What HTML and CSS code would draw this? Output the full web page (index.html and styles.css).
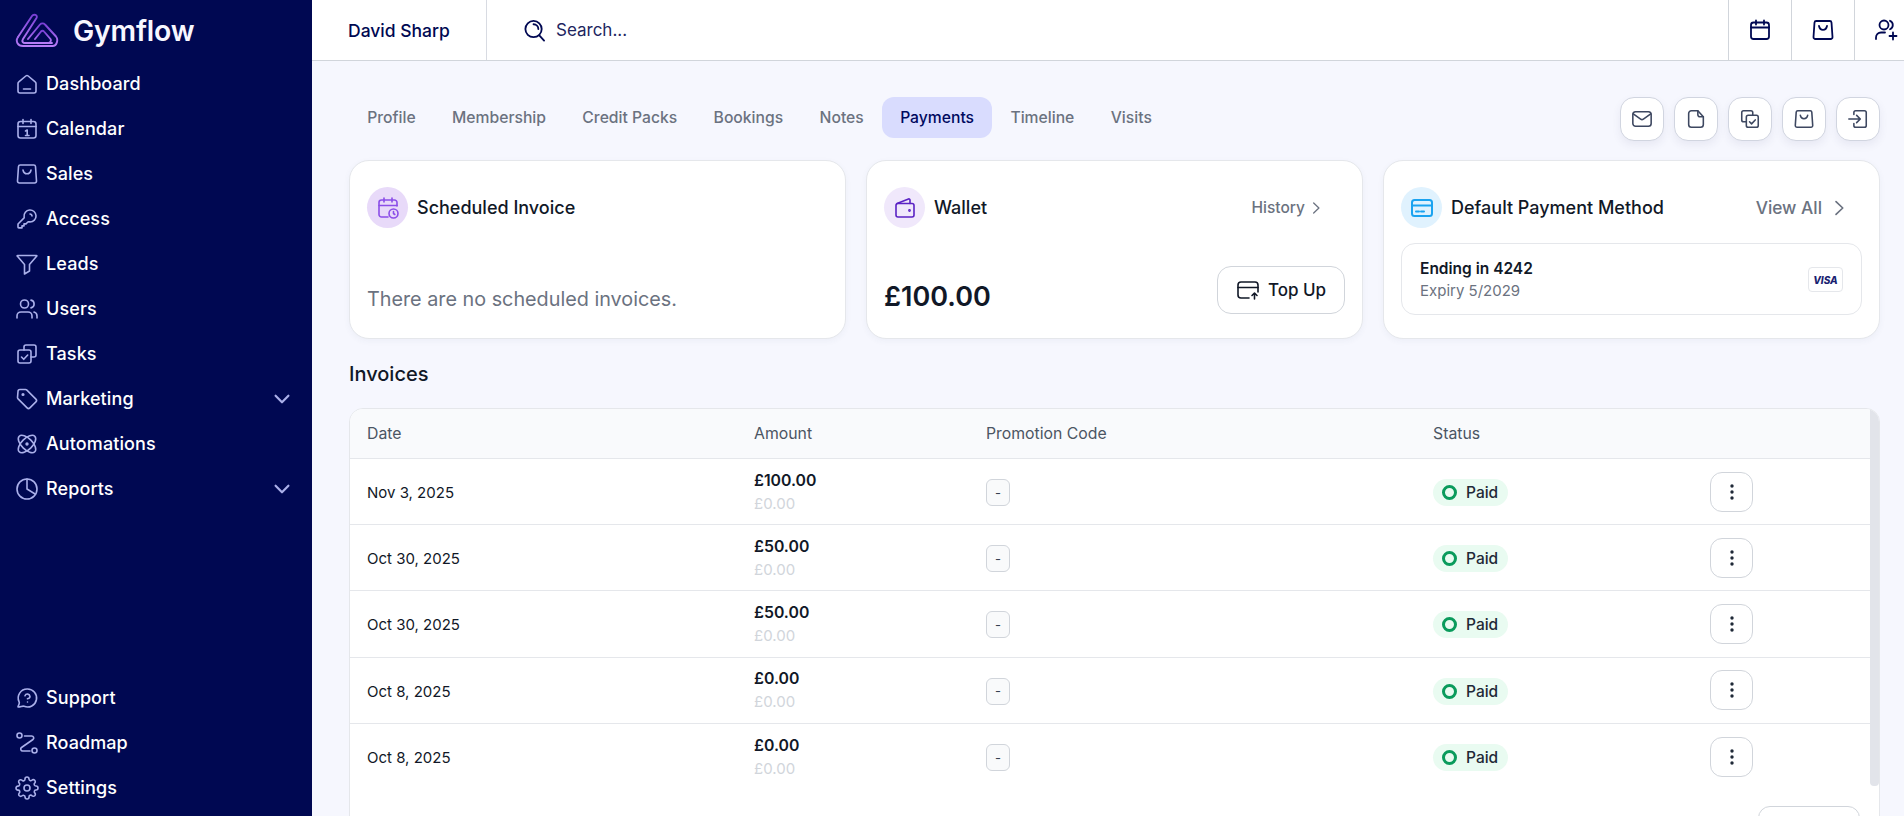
FILE: index.html
```html
<!DOCTYPE html>
<html lang="en">
<head>
<meta charset="utf-8">
<title>Gymflow</title>
<link rel="stylesheet" href="styles.css">
</head>
<body>
<svg class="sprite" aria-hidden="true">
  <defs>
    <linearGradient id="logo-grad" x1="0" y1="0" x2="0" y2="1"><stop offset="0" stop-color="#7a3fd6"/><stop offset="1" stop-color="#b67cf7"/></linearGradient>
    <symbol id="i-home" viewBox="0 0 24 24"><path d="M3 11.5c0-.6.3-1.2.8-1.6l7-5.9c.7-.6 1.700-.6 2.400 0l7 5.900c.5.400.8 1 .8 1.600V19a2 2 0 0 1-2 2H5a2 2 0 0 1-2-2z"/><path d="M8.500 17h7"/></symbol>
    <symbol id="i-cal1" viewBox="0 0 24 24"><rect x="3" y="4.500" width="18" height="16.500" rx="2.500"/><path d="M3 9.500h18M8 2.500v4M16 2.500v4M10.500 14l1.700-1v5.500M10.500 18.500h3.500"/></symbol>
    <symbol id="i-bag" viewBox="0 0 24 24"><path d="M5.200 3h13.600c.9 0 1.600.6 1.700 1.500l1 14.500c.1 1.100-.8 2-1.900 2H4.400c-1.100 0-2-.9-1.900-2l1-14.500C3.600 3.600 4.300 3 5.200 3z"/><path d="M8 8c.5 2.500 2 3.800 4 3.800s3.500-1.300 4-3.800"/></symbol>
    <symbol id="i-key" viewBox="0 0 24 24"><path d="M17 9c0-.5-.2-1-.6-1.400C16 7.200 15.500 7 15 7M15 15a6 6 0 1 0-5.900-5.200c.1.400.1.700.1.800 0 .1-.1.200-.1.300-.1.100-.2.300-.5.500l-5.100 5.100c-.2.200-.3.300-.3.400-.1.100-.2.200-.2.300v2.200c0 .6 0 .8.100 1 .1.200.3.400.5.400.2.100.4.100 1 .1H7v-2h2v-2h2l1.600-1.600c.2-.2.400-.4.500-.4.100-.1.200-.1.300-.1.100 0 .4 0 .8.100.2 0 .5 0 .8 0z"/></symbol>
    <symbol id="i-filter" viewBox="0 0 24 24"><path d="M2.500 3.500h19c.3 0 .5.400.3.600l-7.300 8.400v6.500l-5 3v-9.500L2.200 4.100c-.2-.2 0-.6.300-.6z"/></symbol>
    <symbol id="i-users" viewBox="0 0 24 24"><path d="M17 21v-2a4 4 0 0 0-4-4H6a4 4 0 0 0-4 4v2"/><circle cx="9.500" cy="7" r="4"/><path d="M22 21v-2a4 4 0 0 0-3-3.900M16 3.100a4 4 0 0 1 0 7.800"/></symbol>
    <symbol id="i-tasks" viewBox="0 0 24 24"><path d="M9 8V5a2 2 0 0 1 2-2h8a2 2 0 0 1 2 2v8a2 2 0 0 1-2 2h-3"/><rect x="3" y="8" width="13" height="13" rx="2"/><path d="M6.500 15l2.200 2.300 4-4.300"/></symbol>
    <symbol id="i-tasks2" viewBox="0 0 24 24"><path d="M15 8V5a2 2 0 0 0-2-2H5a2 2 0 0 0-2 2v8a2 2 0 0 0 2 2h3"/><rect x="8" y="8" width="13" height="13" rx="2"/><path d="M11.500 15l2.200 2.300 4-4.300"/></symbol>
    <symbol id="i-tag" viewBox="0 0 24 24"><path d="M3 4.500C3 3.400 3.900 2.500 5 2.500h5.500c.5 0 1 .2 1.400.6l9 9c.8.8.8 2 0 2.800l-6 6c-.8.8-2 .8-2.800 0l-9-9c-.4-.4-.6-.9-.6-1.400z"/><circle cx="8" cy="7.500" r=".8"/></symbol>
    <symbol id="i-atom" viewBox="0 0 24 24"><ellipse cx="12" cy="12" rx="11" ry="5.500" transform="rotate(45 12 12)"/><ellipse cx="12" cy="12" rx="11" ry="5.500" transform="rotate(-45 12 12)"/><circle cx="12" cy="12" r=".9"/></symbol>
    <symbol id="i-pie" viewBox="0 0 24 24"><circle cx="12" cy="12" r="10"/><path d="M12 2v10l8.500 5.200"/></symbol>
    <symbol id="i-support" viewBox="0 0 24 24"><path d="M12.500 3a9 9 0 1 1-3.400 17.300c-.4-.1-.5-.2-.7-.2-.9 0-3.900 1-4.900.9-.5 0-.6-.3-.4-.7.5-.9 1.300-2.800 1.200-3.600 0-.2-.1-.400-.2-.8A9 9 0 0 1 12.500 3z"/><path d="M10 9.700a2.600 2.600 0 0 1 5 .8c0 1.700-2.500 2.300-2.500 2.300M12.500 16h.01"/></symbol>
    <symbol id="i-road" viewBox="0 0 24 24"><circle cx="4.500" cy="4.500" r="2.500"/><circle cx="19.500" cy="19.500" r="2.500"/><path d="M9.500 5h7.200c1.900 0 2.700 2.300 1.300 3.500L6.500 16.500c-1.500 1.100-.7 3.500 1.200 3.500H15"/></symbol>
    <symbol id="i-gear" viewBox="0 0 24 24"><circle cx="12" cy="12" r="3"/><path d="M19.400 15a1.650 1.650 0 0 0 .33 1.820l.06.06a2 2 0 0 1 0 2.830 2 2 0 0 1-2.830 0l-.06-.06a1.650 1.650 0 0 0-1.820-.33 1.650 1.650 0 0 0-1 1.510V21a2 2 0 0 1-2 2 2 2 0 0 1-2-2v-.09A1.650 1.650 0 0 0 9 19.400a1.650 1.650 0 0 0-1.820.33l-.06.06a2 2 0 0 1-2.830 0 2 2 0 0 1 0-2.830l.06-.06a1.650 1.650 0 0 0 .33-1.820 1.650 1.650 0 0 0-1.510-1H3a2 2 0 0 1-2-2 2 2 0 0 1 2-2h.09A1.650 1.650 0 0 0 4.600 9a1.650 1.650 0 0 0-.33-1.820l-.06-.06a2 2 0 0 1 0-2.830 2 2 0 0 1 2.830 0l.06.06a1.650 1.650 0 0 0 1.820.33H9a1.650 1.650 0 0 0 1-1.510V3a2 2 0 0 1 2-2 2 2 0 0 1 2 2v.09a1.650 1.650 0 0 0 1 1.510 1.650 1.650 0 0 0 1.820-.33l.06-.06a2 2 0 0 1 2.830 0 2 2 0 0 1 0 2.830l-.06.06a1.650 1.650 0 0 0-.33 1.820V9a1.650 1.650 0 0 0 1.510 1H21a2 2 0 0 1 2 2 2 2 0 0 1-2 2h-.09a1.650 1.650 0 0 0-1.510 1z"/></symbol>
    <symbol id="i-down" viewBox="0 0 24 24"><path d="M5 8.500l7 7 7-7"/></symbol>
    <symbol id="i-right" viewBox="0 0 24 24"><path d="M8 3.500l9 8.500-9 8.500"/></symbol>
    <symbol id="i-search" viewBox="0 0 24 24"><circle cx="11" cy="10.500" r="8.500"/><path d="M17 17l5 5.500M11 5.500a5 5 0 0 1 5 5"/></symbol>
    <symbol id="i-cal" viewBox="0 0 24 24"><rect x="3" y="4.500" width="18" height="16.500" rx="2.500"/><path d="M3 9.500h18M8 2.500v4M16 2.500v4"/></symbol>
    <symbol id="i-useradd" viewBox="0 0 24 24"><path d="M2 21v-1.500a5 5 0 0 1 5-5h4"/><circle cx="10" cy="7" r="4.500"/><path d="M16 2.800c1.600.6 2.800 2.200 2.800 4.200s-1.200 3.500-2.800 4.200M19 14.500v7M15.500 18h7"/></symbol>
    <symbol id="i-mail" viewBox="0 0 24 24"><rect x="2" y="4" width="20" height="16" rx="3"/><path d="M2.500 6.500l8 5.700c1 .7 2 .7 3 0l8-5.700"/></symbol>
    <symbol id="i-note" viewBox="0 0 24 24"><path d="M14 3H7a3 3 0 0 0-3 3v12a3 3 0 0 0 3 3h10a3 3 0 0 0 3-3V9.500z"/><path d="M14 3v4a2.500 2.500 0 0 0 2.500 2.500H20"/></symbol>
    <symbol id="i-login" viewBox="0 0 24 24"><path d="M7.500 7V5c0-1.100 1-2 2-2h9.500c1.100 0 2 .9 2 2v14c0 1.100-.9 2-2 2H9.500c-1 0-2-.9-2-2v-2"/><path d="M2 12h12M10.500 8l4 4-4 4"/></symbol>
    <symbol id="i-calclock" viewBox="0 0 24 24"><path d="M21 10V6.500A2.500 2.500 0 0 0 18.500 4h-13A2.500 2.500 0 0 0 3 6.500v12A2.500 2.500 0 0 0 5.500 21H12"/><path d="M3 9.500h18M8 2v4M16 2v4"/><circle cx="17.500" cy="17.500" r="4.500"/><path d="M17.500 15.500v2l1.300 1"/></symbol>
    <symbol id="i-wallet" viewBox="0 0 24 24"><path d="M4 7.500L15.500 3c.8-.3 1.500.2 1.500 1v3.500"/><rect x="3" y="7.500" width="18" height="13.500" rx="2"/><circle cx="16.500" cy="14.500" r=".6"/></symbol>
    <symbol id="i-card" viewBox="0 0 24 24"><rect x="2" y="4" width="20" height="16" rx="2.500"/><path d="M2 9.500h20"/><path d="M6 15.500h3M11 15.500h3"/></symbol>
    <symbol id="i-cardup" viewBox="0 0 24 24"><path d="M13 20H5a3 3 0 0 1-3-3V7a3 3 0 0 1 3-3h14a3 3 0 0 1 3 3v7"/><path d="M2 9.500h20M18.500 21v-6M16 17.500l2.500-2.500 2.500 2.500"/></symbol>
  </defs>
</svg>
<div class="app">
  <aside class="sidebar">
    <div class="brand">
      <svg class="logo" viewBox="0 0 44 37" fill="none"><path d="M3 25L17 4c1.600-2.400 6.200-1 4.500 2L8 27c-1.500 2.500 0 4 2 4h27"/><path d="M13 27L25 12.500c1.300-1.500 3.700-1.500 5 0L41 24.500c2.500 3 1 9.500-3.500 9.500H8c-5 0-8-4.500-5-9"/><path d="M20 27l6-7.500c.9-1 2.200-1 3 0l6.500 7.500c1 1.500 0 3.500-2 4"/></svg>
      <span class="brand-name">Gymflow</span>
    </div>
    <nav class="nav">
      <a class="nav-item"><svg class="ico nav-ico"><use href="#i-home"/></svg><span>Dashboard</span></a>
      <a class="nav-item"><svg class="ico nav-ico"><use href="#i-cal1"/></svg><span>Calendar</span></a>
      <a class="nav-item"><svg class="ico nav-ico"><use href="#i-bag"/></svg><span>Sales</span></a>
      <a class="nav-item"><svg class="ico nav-ico"><use href="#i-key"/></svg><span>Access</span></a>
      <a class="nav-item"><svg class="ico nav-ico"><use href="#i-filter"/></svg><span>Leads</span></a>
      <a class="nav-item"><svg class="ico nav-ico"><use href="#i-users"/></svg><span>Users</span></a>
      <a class="nav-item"><svg class="ico nav-ico"><use href="#i-tasks"/></svg><span>Tasks</span></a>
      <a class="nav-item"><svg class="ico nav-ico"><use href="#i-tag"/></svg><span>Marketing</span><svg class="ico nav-caret"><use href="#i-down"/></svg></a>
      <a class="nav-item"><svg class="ico nav-ico"><use href="#i-atom"/></svg><span>Automations</span></a>
      <a class="nav-item"><svg class="ico nav-ico"><use href="#i-pie"/></svg><span>Reports</span><svg class="ico nav-caret"><use href="#i-down"/></svg></a>
    </nav>
    <nav class="nav nav-bottom">
      <a class="nav-item"><svg class="ico nav-ico"><use href="#i-support"/></svg><span>Support</span></a>
      <a class="nav-item"><svg class="ico nav-ico"><use href="#i-road"/></svg><span>Roadmap</span></a>
      <a class="nav-item"><svg class="ico nav-ico"><use href="#i-gear"/></svg><span>Settings</span></a>
    </nav>
  </aside>
  <div class="main">
    <header class="topbar">
      <div class="person">David Sharp</div>
      <div class="search"><svg class="ico search-ico"><use href="#i-search"/></svg><span>Search...</span></div>
      <div class="top-actions">
        <div class="top-cell"><svg class="ico top-ico"><use href="#i-cal"/></svg></div>
        <div class="top-cell"><svg class="ico top-ico"><use href="#i-bag"/></svg></div>
        <div class="top-cell"><svg class="ico top-ico"><use href="#i-useradd"/></svg></div>
      </div>
    </header>
    <main class="content">
      <div class="tabbar">
        <div class="tabs">
          <a class="tab">Profile</a>
          <a class="tab">Membership</a>
          <a class="tab">Credit Packs</a>
          <a class="tab">Bookings</a>
          <a class="tab">Notes</a>
          <a class="tab tab-active">Payments</a>
          <a class="tab">Timeline</a>
          <a class="tab">Visits</a>
        </div>
        <div class="quick">
          <button class="quick-btn"><svg class="ico quick-ico"><use href="#i-mail"/></svg></button>
          <button class="quick-btn"><svg class="ico quick-ico"><use href="#i-note"/></svg></button>
          <button class="quick-btn"><svg class="ico quick-ico"><use href="#i-tasks2"/></svg></button>
          <button class="quick-btn"><svg class="ico quick-ico"><use href="#i-bag"/></svg></button>
          <button class="quick-btn"><svg class="ico quick-ico"><use href="#i-login"/></svg></button>
        </div>
      </div>
      <section class="cards">
        <article class="card">
          <div class="card-head">
            <span class="badge badge-purple"><svg class="ico badge-ico"><use href="#i-calclock"/></svg></span>
            <h3 class="card-title">Scheduled Invoice</h3>
          </div>
          <p class="empty">There are no scheduled invoices.</p>
        </article>
        <article class="card">
          <div class="card-head">
            <span class="badge badge-violet"><svg class="ico badge-ico"><use href="#i-wallet"/></svg></span>
            <h3 class="card-title">Wallet</h3>
            <a class="card-link card-link-sm"><span>History</span><svg class="ico link-ico"><use href="#i-right"/></svg></a>
          </div>
          <div class="wallet-foot">
            <span class="balance">£100.00</span>
            <button class="topup"><svg class="ico topup-ico"><use href="#i-cardup"/></svg><span>Top Up</span></button>
          </div>
        </article>
        <article class="card">
          <div class="card-head">
            <span class="badge badge-blue"><svg class="ico badge-ico"><use href="#i-card"/></svg></span>
            <h3 class="card-title">Default Payment Method</h3>
            <a class="card-link card-link-lg"><span>View All</span><svg class="ico link-ico"><use href="#i-right"/></svg></a>
          </div>
          <div class="pay-method">
            <div>
              <div class="pay-end">Ending in 4242</div>
              <div class="pay-exp">Expiry 5/2029</div>
            </div>
            <span class="visa">VISA</span>
          </div>
        </article>
      </section>
      <h2 class="section-title">Invoices</h2>
      <section class="table">
        <div class="scroll-thumb"></div>
        <div class="row row-head"><span>Date</span><span>Amount</span><span>Promotion Code</span><span>Status</span><span></span></div>
        <div class="row">
          <span class="date">Nov 3, 2025</span>
          <div><div class="amt">£100.00</div><div class="amt-sub">£0.00</div></div>
          <div class="cell"><span class="chip">-</span></div>
          <div class="cell"><span class="paid"><i class="paid-dot"></i>Paid</span></div>
          <button class="more"><svg class="dots" viewBox="0 0 4 16"><circle cx="2" cy="2" r="1.700"/><circle cx="2" cy="8" r="1.700"/><circle cx="2" cy="14" r="1.700"/></svg></button>
        </div>
        <div class="row">
          <span class="date">Oct 30, 2025</span>
          <div><div class="amt">£50.00</div><div class="amt-sub">£0.00</div></div>
          <div class="cell"><span class="chip">-</span></div>
          <div class="cell"><span class="paid"><i class="paid-dot"></i>Paid</span></div>
          <button class="more"><svg class="dots" viewBox="0 0 4 16"><circle cx="2" cy="2" r="1.700"/><circle cx="2" cy="8" r="1.700"/><circle cx="2" cy="14" r="1.700"/></svg></button>
        </div>
        <div class="row">
          <span class="date">Oct 30, 2025</span>
          <div><div class="amt">£50.00</div><div class="amt-sub">£0.00</div></div>
          <div class="cell"><span class="chip">-</span></div>
          <div class="cell"><span class="paid"><i class="paid-dot"></i>Paid</span></div>
          <button class="more"><svg class="dots" viewBox="0 0 4 16"><circle cx="2" cy="2" r="1.700"/><circle cx="2" cy="8" r="1.700"/><circle cx="2" cy="14" r="1.700"/></svg></button>
        </div>
        <div class="row">
          <span class="date">Oct 8, 2025</span>
          <div><div class="amt">£0.00</div><div class="amt-sub">£0.00</div></div>
          <div class="cell"><span class="chip">-</span></div>
          <div class="cell"><span class="paid"><i class="paid-dot"></i>Paid</span></div>
          <button class="more"><svg class="dots" viewBox="0 0 4 16"><circle cx="2" cy="2" r="1.700"/><circle cx="2" cy="8" r="1.700"/><circle cx="2" cy="14" r="1.700"/></svg></button>
        </div>
        <div class="row row-last">
          <span class="date">Oct 8, 2025</span>
          <div><div class="amt">£0.00</div><div class="amt-sub">£0.00</div></div>
          <div class="cell"><span class="chip">-</span></div>
          <div class="cell"><span class="paid"><i class="paid-dot"></i>Paid</span></div>
          <button class="more"><svg class="dots" viewBox="0 0 4 16"><circle cx="2" cy="2" r="1.700"/><circle cx="2" cy="8" r="1.700"/><circle cx="2" cy="14" r="1.700"/></svg></button>
        </div>
        <div class="table-foot"><button class="page-btn"></button></div>
      </section>
    </main>
  </div>
</div>
</body>
</html>
```
FILE: styles.css
```css
* { box-sizing: border-box; }
html, body { height: 100%; }
body {
  margin: 0;
  overflow: hidden;
  font-family: Inter, "Noto Sans", sans-serif;
  color: #111827;
  background: #f6f7fe;
}
h2, h3, p { margin: 0; font-weight: 500; }
button { font: inherit; padding: 0; background: #fff; cursor: pointer; }
.sprite { position: absolute; width: 0; height: 0; }
.ico { fill: none; stroke: currentColor; stroke-width: 1.6; stroke-linecap: round; stroke-linejoin: round; flex: none; }

.app { display: flex; height: 816px; overflow: hidden; }

.sidebar {
  width: 312px;
  flex: none;
  background: #000852;
  color: #fff;
  display: flex;
  flex-direction: column;
  padding-bottom: 6px;
}
.brand { height: 61px; display: flex; align-items: center; padding: 0 0 0 15px; gap: 14px; }
.logo { width: 44px; height: 37px; stroke: url(#logo-grad); stroke-width: 1.900; stroke-linecap: round; stroke-linejoin: round; flex: none; }
.brand-name { font-size: 28.400px; font-weight: 600; letter-spacing: -.2px; color: #f7f7ff; }
.nav { display: flex; flex-direction: column; }
.nav-bottom { margin-top: auto; }
.nav-item { height: 45px; display: flex; align-items: center; padding: 0 19px 0 15px; gap: 7px; font-size: 18px; font-weight: 500; letter-spacing: .1px; }
.nav-ico { width: 24px; height: 24px; color: #aab0ea; }
.nav-caret { width: 22px; height: 22px; margin-left: auto; color: #aab0ea; stroke-width: 2.400; }

.main { flex: 1; min-width: 0; display: flex; flex-direction: column; }
.topbar { height: 61px; flex: none; background: #fff; border-bottom: 1px solid #d1d5db; display: flex; align-items: stretch; color: #000852; }
.person { width: 175px; padding-left: 36px; border-right: 1px solid #d8dbe2; display: flex; align-items: center; font-size: 17.500px; font-weight: 500; }
.search { flex: 1; display: flex; align-items: center; padding-left: 36px; gap: 10px; font-size: 17px; color: #1d2560; }
.search-ico { width: 23px; height: 23px; color: #000852; stroke-width: 1.900; }
.top-actions { display: flex; margin-right: -13px; }
.top-cell { width: 63px; border-left: 1px solid #d1d5db; display: flex; align-items: center; justify-content: center; }
.top-ico { width: 24px; height: 24px; color: #000852; stroke-width: 1.800; }

.content { flex: 1; padding: 36px 24px 0 37px; min-height: 0; }
.tabbar { display: flex; justify-content: space-between; align-items: flex-start; margin-bottom: 19px; }
.tabs { display: flex; }
.tab { height: 41px; padding: 0 18.200px; display: flex; align-items: center; border-radius: 12px; font-size: 15.700px; font-weight: 500; color: #6b7280; }
.tab-active { background: #d9dcfe; color: #000a5e; }
.quick { display: flex; gap: 10px; }
.quick-btn { width: 44px; height: 44px; border: 1px solid #d1d5e0; border-radius: 14px; display: flex; align-items: center; justify-content: center; box-shadow: 0 4px 8px rgba(60, 70, 120, .08); }
.quick-ico { width: 22px; height: 22px; color: #3d4760; stroke-width: 1.700; }

.cards { display: grid; grid-template-columns: repeat(3, 497px); gap: 20px; height: 179px; }
.card { background: #fff; border: 1px solid #e5e7eb; border-radius: 20px; padding: 26px 17px 0; box-shadow: 0 2px 6px rgba(60, 70, 120, .05); display: flex; flex-direction: column; }
.card-head { display: flex; align-items: center; height: 41px; }
.badge { width: 41px; height: 41px; border-radius: 50%; display: flex; align-items: center; justify-content: center; flex: none; margin-right: 9px; }
.badge-ico { width: 24px; height: 24px; }
.badge-purple { background: #e8daf9; color: #8b4ee8; }
.badge-violet { background: #f0e8fb; color: #5a22c4; }
.badge-blue { background: #e0f2fe; color: #1ba3f0; }
.badge-blue .badge-ico { stroke-width: 2; }
.card-title { font-size: 18px; font-weight: 500; color: #111827; }
.card-link { margin-left: auto; display: flex; align-items: center; color: #6b7280; }
.card-link-sm { font-size: 15.500px; font-weight: 500; gap: 4px; margin-right: 22px; }
.card-link-sm .link-ico { width: 14px; height: 14px; }
.card-link-lg { font-size: 17.300px; font-weight: 500; gap: 8px; margin-right: 14px; }
.card-link-lg .link-ico { width: 18px; height: 18px; }
.link-ico { stroke-width: 2.200; }
.empty { margin-top: 59px; font-size: 19.800px; font-weight: 400; color: #6b7280; }
.wallet-foot { margin-top: 38px; display: flex; align-items: center; justify-content: space-between; }
.balance { font-size: 27px; font-weight: 600; color: #111827; padding-top: 12px; }
.topup { width: 128px; height: 48px; border: 1px solid #d1d5db; border-radius: 14px; display: flex; align-items: center; justify-content: center; gap: 8px; font-size: 17px; font-weight: 500; color: #111827; }
.topup-ico { width: 24px; height: 24px; }
.pay-method { margin-top: 15px; height: 72px; border: 1px solid #e5e7eb; border-radius: 14px; padding: 1px 18px 0; display: flex; align-items: center; justify-content: space-between; }
.pay-end { font-size: 15.500px; font-weight: 600; color: #111827; line-height: 22px; }
.pay-exp { font-size: 15px; color: #6b7280; line-height: 22px; }
.visa { width: 35px; height: 25px; border: 1px solid #e5e7eb; border-radius: 4px; display: flex; align-items: center; justify-content: center; font-size: 10px; font-weight: 800; font-style: italic; color: #1a1f71; }

.section-title { margin-top: 22px; height: 26px; line-height: 26px; font-size: 20px; font-weight: 500; color: #111827; }
.table { position: relative; margin-top: 21px; height: 500px; background: #fff; border: 1px solid #e5e7eb; border-radius: 14px; overflow: hidden; }
.scroll-thumb { position: absolute; top: 0; right: 0; width: 9px; height: 377px; background: #e2e4ea; border-radius: 0 0 4px 4px; }
.row { display: grid; grid-template-columns: 387px 232px 447px 277px 43px; align-items: center; height: 66.200px; padding-left: 17px; border-bottom: 1px solid #e5e7eb; font-size: 15px; }
.row-head { height: 50px; background: #f9fafc; font-size: 15.800px; font-weight: 400; color: #4b5563; }
.row-last { border-bottom: 0; }
.date { color: #111827; margin-top: 2px; }
.cell { display: flex; margin-top: 2px; }
.amt { font-size: 15.800px; font-weight: 600; color: #111827; line-height: 23px; }
.amt-sub { color: #d1d5db; line-height: 23px; }
.chip { display: inline-flex; width: 24px; height: 27px; align-items: center; justify-content: center; border: 1px solid #d1d5db; border-radius: 6px; background: #f9fafb; font-size: 13px; color: #374151; }
.paid { display: inline-flex; align-items: center; gap: 9px; height: 27px; padding: 0 10px 0 9px; border-radius: 14px; background: #e9fbf1; font-size: 15.500px; font-weight: 500; color: #1f2937; }
.paid-dot { width: 15px; height: 15px; border-radius: 50%; border: 3.500px solid #0a9b5c; }
.more { width: 43px; height: 40px; border: 1px solid #d1d5db; border-radius: 12px; display: flex; align-items: center; justify-content: center; }
.dots { width: 4px; height: 16px; fill: #1f2937; }
.table-foot { display: flex; justify-content: flex-end; padding: 16px 19px 0 0; }
.page-btn { width: 102px; height: 40px; border: 1px solid #d1d5db; border-radius: 12px; }
```
